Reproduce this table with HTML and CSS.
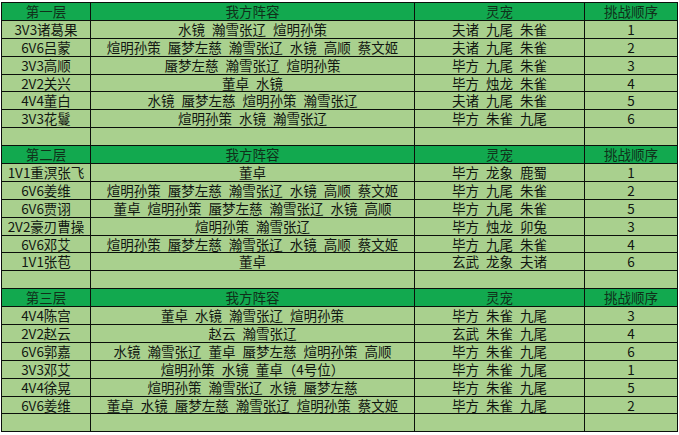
FILE: index.html
```html
<!DOCTYPE html>
<html lang="zh">
<head>
<meta charset="utf-8">
<link rel="stylesheet" href="styles.css">
</head>
<body>
<div class="sheet">
  <div class="c h">第一层</div><div class="c h">我方阵容</div><div class="c h">灵宠</div><div class="c h">挑战顺序</div>
  <div class="c">3V3诸葛果</div><div class="c">水镜 瀚雪张辽 煊明孙策</div><div class="c">夫诸 九尾 朱雀</div><div class="c">1</div>
  <div class="c">6V6吕蒙</div><div class="c">煊明孙策 蜃梦左慈 瀚雪张辽 水镜 高顺 蔡文姬</div><div class="c">夫诸 九尾 朱雀</div><div class="c">2</div>
  <div class="c">3V3高顺</div><div class="c">蜃梦左慈 瀚雪张辽 煊明孙策</div><div class="c">毕方 九尾 朱雀</div><div class="c">3</div>
  <div class="c">2V2关兴</div><div class="c">董卓 水镜</div><div class="c">毕方 烛龙 朱雀</div><div class="c">4</div>
  <div class="c">4V4董白</div><div class="c">水镜 蜃梦左慈 煊明孙策 瀚雪张辽</div><div class="c">夫诸 九尾 朱雀</div><div class="c">5</div>
  <div class="c">3V3花鬘</div><div class="c">煊明孙策 水镜 瀚雪张辽</div><div class="c">毕方 朱雀 九尾</div><div class="c">6</div>
  <div class="c"></div><div class="c"></div><div class="c"></div><div class="c"></div>

  <div class="c h">第二层</div><div class="c h">我方阵容</div><div class="c h">灵宠</div><div class="c h">挑战顺序</div>
  <div class="c">1V1重溟张飞</div><div class="c">董卓</div><div class="c">毕方 龙象 鹿蜀</div><div class="c">1</div>
  <div class="c">6V6姜维</div><div class="c">煊明孙策 蜃梦左慈 瀚雪张辽 水镜 高顺 蔡文姬</div><div class="c">毕方 九尾 朱雀</div><div class="c">2</div>
  <div class="c">6V6贾诩</div><div class="c">董卓 煊明孙策 蜃梦左慈 瀚雪张辽 水镜 高顺</div><div class="c">毕方 九尾 朱雀</div><div class="c">5</div>
  <div class="c">2V2豪刃曹操</div><div class="c">煊明孙策 瀚雪张辽</div><div class="c">毕方 烛龙 卯兔</div><div class="c">3</div>
  <div class="c">6V6邓艾</div><div class="c">煊明孙策 蜃梦左慈 瀚雪张辽 水镜 高顺 蔡文姬</div><div class="c">毕方 九尾 朱雀</div><div class="c">4</div>
  <div class="c">1V1张苞</div><div class="c">董卓</div><div class="c">玄武 龙象 夫诸</div><div class="c">6</div>
  <div class="c"></div><div class="c"></div><div class="c"></div><div class="c"></div>

  <div class="c h">第三层</div><div class="c h">我方阵容</div><div class="c h">灵宠</div><div class="c h">挑战顺序</div>
  <div class="c">4V4陈宫</div><div class="c">董卓 水镜 瀚雪张辽 煊明孙策</div><div class="c">毕方 朱雀 九尾</div><div class="c">3</div>
  <div class="c">2V2赵云</div><div class="c">赵云 瀚雪张辽</div><div class="c">玄武 朱雀 九尾</div><div class="c">4</div>
  <div class="c">6V6郭嘉</div><div class="c">水镜 瀚雪张辽 董卓 蜃梦左慈 煊明孙策 高顺</div><div class="c">毕方 朱雀 九尾</div><div class="c">6</div>
  <div class="c">3V3邓艾</div><div class="c">煊明孙策 水镜 董卓（4号位）</div><div class="c">毕方 朱雀 九尾</div><div class="c">1</div>
  <div class="c">4V4徐晃</div><div class="c">煊明孙策 瀚雪张辽 水镜 蜃梦左慈</div><div class="c">毕方 朱雀 九尾</div><div class="c">5</div>
  <div class="c">6V6姜维</div><div class="c">董卓 水镜 蜃梦左慈 瀚雪张辽 煊明孙策 蔡文姬</div><div class="c">毕方 朱雀 九尾</div><div class="c">2</div>
  <div class="c"></div><div class="c"></div><div class="c"></div><div class="c"></div>
</div>
</body>
</html>
```
FILE: styles.css
```css
html, body {
  margin: 0;
  padding: 0;
  background: #ffffff;
}
body {
  padding: 2px 0 0 1px;
  font-family: "Noto Sans CJK SC", "Liberation Sans", sans-serif;
}
.sheet {
  display: grid;
  grid-template-columns: 89px 324px 170px 93px;
  grid-auto-rows: 17.9px;
  width: 676px;
  border-top: 1px solid #0b0f0b;
  border-left: 1px solid #0b0f0b;
}
.c {
  box-sizing: border-box;
  border-right: 1px solid #0b0f0b;
  border-bottom: 1px solid #0b0f0b;
  background: #a9d08e;
  color: #111611;
  font-size: 13.5px;
  line-height: 17px;
  text-align: center;
  white-space: nowrap;
  word-spacing: 4px;
}
.h {
  background: #12a94f;
  color: #10301a;
}
```
